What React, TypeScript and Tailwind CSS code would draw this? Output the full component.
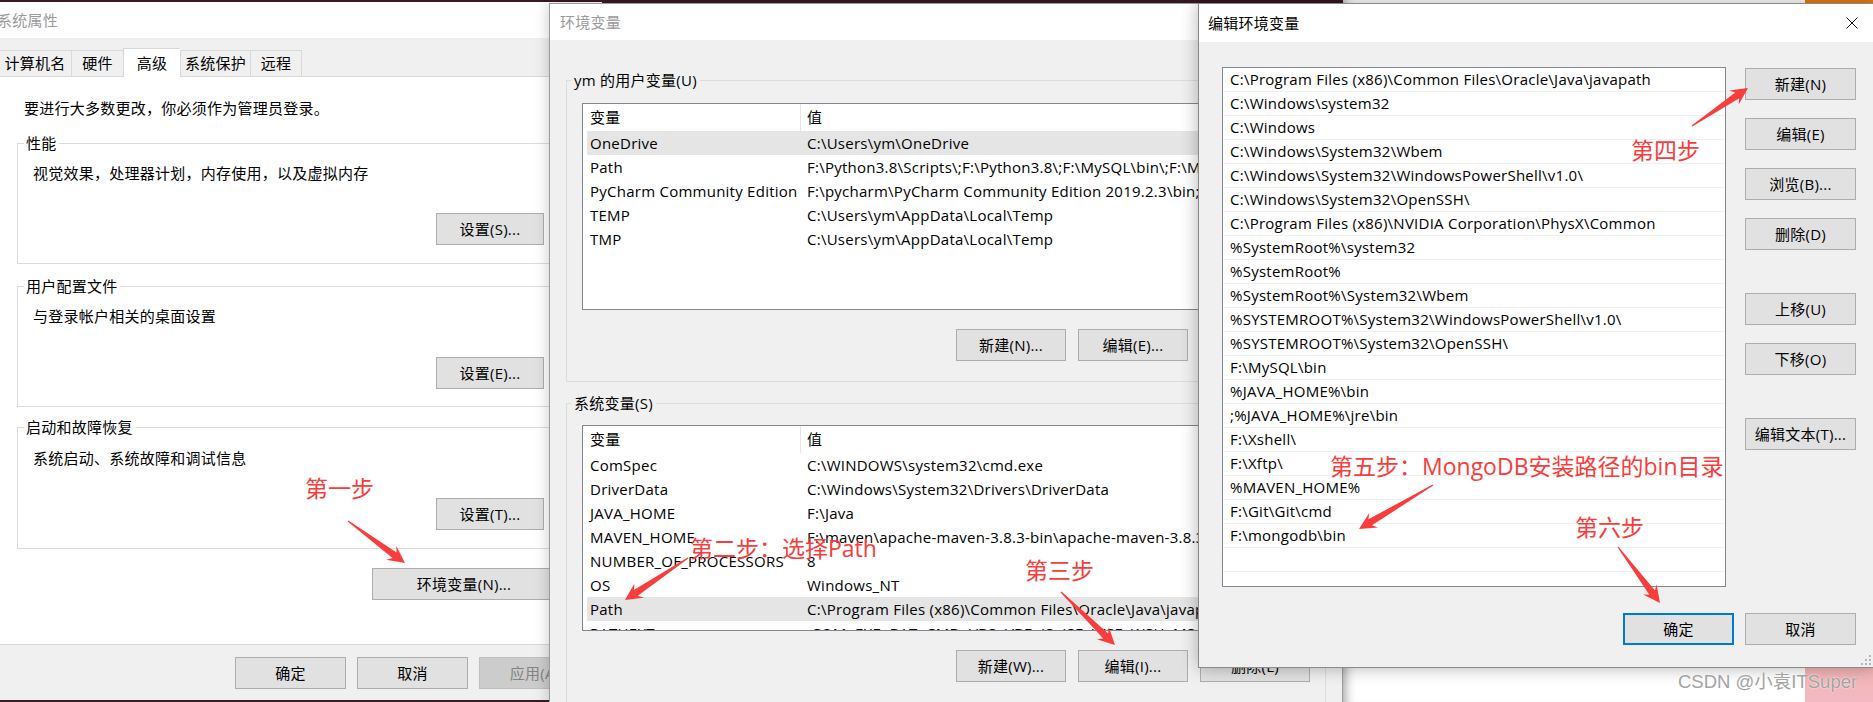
import React from "react";

const RED = "#f93c3c";

const userVars = [
  ["OneDrive", "C:\\Users\\ym\\OneDrive"],
  ["Path", "F:\\Python3.8\\Scripts\\;F:\\Python3.8\\;F:\\MySQL\\bin\\;F:\\MongoDB\\bin;C:\\Users\\ym\\AppData"],
  ["PyCharm Community Edition", "F:\\pycharm\\PyCharm Community Edition 2019.2.3\\bin;"],
  ["TEMP", "C:\\Users\\ym\\AppData\\Local\\Temp"],
  ["TMP", "C:\\Users\\ym\\AppData\\Local\\Temp"],
];

const sysVars = [
  ["ComSpec", "C:\\WINDOWS\\system32\\cmd.exe"],
  ["DriverData", "C:\\Windows\\System32\\Drivers\\DriverData"],
  ["JAVA_HOME", "F:\\Java"],
  ["MAVEN_HOME", "F:\\maven\\apache-maven-3.8.3-bin\\apache-maven-3.8.3"],
  ["NUMBER_OF_PROCESSORS", "8"],
  ["OS", "Windows_NT"],
  ["Path", "C:\\Program Files (x86)\\Common Files\\Oracle\\Java\\javapath;C:\\Windows"],
  ["PATHEXT", ".COM;.EXE;.BAT;.CMD;.VBS;.VBE;.JS;.JSE;.WSF;.WSH;.MSC"],
];

const pathItems = [
  "C:\\Program Files (x86)\\Common Files\\Oracle\\Java\\javapath",
  "C:\\Windows\\system32",
  "C:\\Windows",
  "C:\\Windows\\System32\\Wbem",
  "C:\\Windows\\System32\\WindowsPowerShell\\v1.0\\",
  "C:\\Windows\\System32\\OpenSSH\\",
  "C:\\Program Files (x86)\\NVIDIA Corporation\\PhysX\\Common",
  "%SystemRoot%\\system32",
  "%SystemRoot%",
  "%SystemRoot%\\System32\\Wbem",
  "%SYSTEMROOT%\\System32\\WindowsPowerShell\\v1.0\\",
  "%SYSTEMROOT%\\System32\\OpenSSH\\",
  "F:\\MySQL\\bin",
  "%JAVA_HOME%\\bin",
  ";%JAVA_HOME%\\jre\\bin",
  "F:\\Xshell\\",
  "F:\\Xftp\\",
  "%MAVEN_HOME%",
  "F:\\Git\\Git\\cmd",
  "F:\\mongodb\\bin",
  "",
  "",
];

function Btn({ children, className = "" }: { children: React.ReactNode; className?: string }) {
  return (
    <div
      className={`h-[32px] shrink-0 border border-[#adadad] bg-[#e1e1e1] flex items-center justify-center whitespace-nowrap ${className}`}
    >
      {children}
    </div>
  );
}

function VarTable({ rows, selected, height }: { rows: string[][]; selected: string; height: string }) {
  return (
    <div className={`${height} border border-[#828790] bg-white overflow-hidden`}>
      <div className="h-[27px] flex items-center">
        <div className="w-[218px] h-full pl-[7px] flex items-center border-r border-[#e5e5e5]">变量</div>
        <div className="pl-[6px]">值</div>
      </div>
      <div className="px-[4px]">
        {rows.map(([k, v]) => (
          <div
            key={k}
            className={`h-[24px] flex items-center whitespace-nowrap ${k === selected ? "bg-[#e5e5e5]" : ""}`}
          >
            <div className="w-[213px] shrink-0 pl-[3px] overflow-hidden">{k}</div>
            <div className="pl-[7px]">{v}</div>
          </div>
        ))}
      </div>
    </div>
  );
}

function Arrow({ x1, y1, x2, y2 }: { x1: number; y1: number; x2: number; y2: number }) {
  const dx = x2 - x1;
  const dy = y2 - y1;
  const L = Math.hypot(dx, dy);
  const ux = dx / L;
  const uy = dy / L;
  const nx = -uy;
  const ny = ux;
  const pt = (u: number, v: number) => `${x1 + ux * u + nx * v},${y1 + uy * u + ny * v}`;
  const pts = [
    pt(0, 0.6),
    pt(L - 13, 3.5),
    pt(L - 17, 8.5),
    pt(L, 0),
    pt(L - 17, -8.5),
    pt(L - 13, -3.5),
    pt(0, -0.6),
  ].join(" ");
  return <polygon points={pts} fill={RED} />;
}

function Note({ text, className }: { text: string; className: string }) {
  return (
    <div className={`absolute text-[23px] leading-[30px] text-[#f93c3c] whitespace-nowrap tracking-normal ${className}`}>
      {text}
    </div>
  );
}

function SystemProps() {
  return (
    <div className="absolute left-[-8px] top-[2px] w-[610px] h-[698px] bg-[#f0f0f0] flex flex-col">
      <div className="h-[36px] shrink-0 bg-white flex items-center pl-[5px] text-[#9a9a9a]">系统属性</div>
      <div className="h-[38px] shrink-0 flex items-end pl-[6px]">
        <div className="w-[73px] h-[26px] border-t border-l border-[#d9d9d9] flex items-center justify-center">计算机名</div>
        <div className="w-[52px] h-[26px] border-t border-l border-[#d9d9d9] flex items-center justify-center">硬件</div>
        <div className="relative z-10 w-[57px] h-[29px] mb-[-1px] bg-white border-t border-l border-[#d9d9d9] flex items-start pt-[3px] justify-center">
          高级
        </div>
        <div className="w-[70px] h-[26px] border-t border-l border-[#d9d9d9] flex items-center justify-center">系统保护</div>
        <div className="w-[52px] h-[26px] border-t border-l border-r border-[#d9d9d9] flex items-center justify-center">远程</div>
      </div>
      <div className="mx-[6px] h-[569px] shrink-0 bg-white border border-[#d9d9d9] pl-[18px] pr-[40px] flex flex-col">
        <div className="mt-[21px] ml-[7px] leading-[20px]">要进行大多数更改，你必须作为管理员登录。</div>

        <fieldset className="mt-[15px] min-w-0 border border-[#dcdcdc] pl-[6px] pr-[10px] pb-[18px]">
          <legend className="px-[2px] leading-[20px]">性能</legend>
          <div className="flex flex-col">
            <div className="mt-[10px] ml-[9px] leading-[20px]">视觉效果，处理器计划，内存使用，以及虚拟内存</div>
            <Btn className="mt-[30px] self-end w-[108px]">设置(S)...</Btn>
          </div>
        </fieldset>

        <fieldset className="mt-[12px] min-w-0 border border-[#dcdcdc] pl-[6px] pr-[10px] pb-[17px]">
          <legend className="px-[2px] leading-[20px]">用户配置文件</legend>
          <div className="flex flex-col">
            <div className="mt-[10px] ml-[9px] leading-[20px]">与登录帐户相关的桌面设置</div>
            <Btn className="mt-[31px] self-end w-[108px]">设置(E)...</Btn>
          </div>
        </fieldset>

        <fieldset className="mt-[10px] min-w-0 border border-[#dcdcdc] pl-[6px] pr-[10px] pb-[18px]">
          <legend className="px-[2px] leading-[20px]">启动和故障恢复</legend>
          <div className="flex flex-col">
            <div className="mt-[11px] ml-[9px] leading-[20px]">系统启动、系统故障和调试信息</div>
            <Btn className="mt-[30px] self-end w-[108px]">设置(T)...</Btn>
          </div>
        </fieldset>

        <Btn className="mt-[19px] self-end w-[184px] mr-[-1px]">环境变量(N)...</Btn>
      </div>
      <div className="flex justify-end gap-[11px] pt-[12px] pr-[12px]">
        <Btn className="w-[111px]">确定</Btn>
        <Btn className="w-[111px]">取消</Btn>
        <div className="w-[111px] h-[32px] border border-[#bfbfbf] bg-[#cccccc] text-[#838383] flex items-center justify-center">
          应用(A)
        </div>
      </div>
    </div>
  );
}

function EnvVars() {
  return (
    <div className="absolute left-[549px] top-[3px] w-[794px] h-[720px] border border-[#9c9c9c] bg-[#f0f0f0] flex flex-col shadow-[0_0_14px_rgba(0,0,0,0.22)]">
      <div className="h-[36px] shrink-0 bg-white flex items-center pl-[10px] text-[#9a9a9a]">环境变量</div>
      <div className="px-[16px] flex flex-col">
        <fieldset className="mt-[30px] min-w-0 border border-[#dcdcdc] pl-[4px] pr-[15px] pb-[20px]">
          <legend className="px-[3px] leading-[20px]">ym 的用户变量(U)</legend>
          <div className="ml-[11px] mt-[13px]">
            <VarTable rows={userVars} selected="OneDrive" height="h-[207px]" />
            <div className="mt-[19px] flex justify-end gap-[12px]">
              <Btn className="w-[110px]">新建(N)...</Btn>
              <Btn className="w-[110px]">编辑(E)...</Btn>
              <Btn className="w-[110px]">删除(D)</Btn>
            </div>
          </div>
        </fieldset>

        <fieldset className="mt-[11px] min-w-0 border border-[#dcdcdc] pl-[4px] pr-[15px] pb-[20px]">
          <legend className="px-[3px] leading-[20px]">系统变量(S)</legend>
          <div className="ml-[11px] mt-[12px]">
            <VarTable rows={sysVars} selected="Path" height="h-[206px]" />
            <div className="mt-[19px] flex justify-end gap-[12px]">
              <Btn className="w-[110px]">新建(W)...</Btn>
              <Btn className="w-[110px]">编辑(I)...</Btn>
              <Btn className="w-[110px]">删除(L)</Btn>
            </div>
          </div>
        </fieldset>
      </div>
    </div>
  );
}

function EditEnv() {
  return (
    <div className="absolute left-[1198px] top-[3px] w-[678px] h-[665px] border border-[#8a8a8a] bg-[#f0f0f0] flex flex-col shadow-[0_0_16px_rgba(0,0,0,0.3)]">
      <div className="h-[38px] shrink-0 bg-white flex items-center justify-between">
        <span className="pl-[9px]">编辑环境变量</span>
        <div className="w-[46px] h-full flex items-center justify-center">
          <svg width="12" height="12" viewBox="0 0 12 12">
            <path d="M0.5 0.5 L11.5 11.5 M11.5 0.5 L0.5 11.5" stroke="#111" strokeWidth="1" />
          </svg>
        </div>
      </div>
      <div className="flex pl-[23px] pt-[25px]">
        <div className="w-[504px] h-[520px] shrink-0 border border-[#828790] bg-white overflow-hidden">
          {pathItems.map((p, i) => (
            <div key={i} className="h-[24px] border-b border-[#f0f0f0] pl-[7px] flex items-center whitespace-nowrap">
              {p}
            </div>
          ))}
        </div>
        <div className="ml-[19px] mt-[1px] w-[111px] flex flex-col gap-[18px]">
          <Btn className="w-[111px]">新建(N)</Btn>
          <Btn className="w-[111px]">编辑(E)</Btn>
          <Btn className="w-[111px]">浏览(B)...</Btn>
          <Btn className="w-[111px]">删除(D)</Btn>
          <Btn className="w-[111px] mt-[25px]">上移(U)</Btn>
          <Btn className="w-[111px]">下移(O)</Btn>
          <Btn className="w-[111px] mt-[25px]">编辑文本(T)...</Btn>
        </div>
      </div>
      <div className="mt-[26px] flex justify-end gap-[11px] pr-[19px]">
        <div className="w-[111px] h-[32px] border-2 border-[#0078d7] bg-[#e1e1e1] flex items-center justify-center">确定</div>
        <Btn className="w-[111px]">取消</Btn>
      </div>
      <div className="mt-[10px] flex justify-end pr-[3px]">
        <svg width="11" height="11" viewBox="0 0 11 11">
          <rect x="8" y="0" width="2" height="2" fill="#b4b4b4" />
          <rect x="4" y="4" width="2" height="2" fill="#b4b4b4" />
          <rect x="8" y="4" width="2" height="2" fill="#b4b4b4" />
          <rect x="0" y="8" width="2" height="2" fill="#b4b4b4" />
          <rect x="4" y="8" width="2" height="2" fill="#b4b4b4" />
          <rect x="8" y="8" width="2" height="2" fill="#b4b4b4" />
        </svg>
      </div>
    </div>
  );
}

export default function App() {
  return (
    <div className="relative w-[1873px] h-[702px] overflow-hidden bg-[#3a1a22] text-black text-[15px] tracking-[0.25px] font-['Open_Sans','Noto_Sans_CJK_SC',sans-serif]">
      <div className="absolute left-[1343px] top-0 w-[462px] h-[702px] bg-white shadow-[inset_10px_0_10px_-8px_rgba(0,0,0,0.25)]" />
      <div className="absolute left-[1805px] top-0 w-[68px] h-[702px] bg-linear-to-b from-[#e97c0c] via-[#f0901e] to-[#f3b9c2]" />

      <SystemProps />
      <EnvVars />
      <EditEnv />

      <svg className="absolute inset-0 pointer-events-none" width="1873" height="702">
        <Arrow x1={348} y1={521} x2={405} y2={563} />
        <Arrow x1={688} y1={558} x2={625} y2={600} />
        <Arrow x1={1061} y1={592} x2={1115} y2={645} />
        <Arrow x1={1692} y1={126} x2={1748} y2={88} />
        <Arrow x1={1433} y1={485} x2={1359} y2={529} />
        <Arrow x1={1618} y1={547} x2={1660} y2={603} />
      </svg>

      <Note text="第一步" className="left-[305px] top-[473px]" />
      <Note text="第二步：选择Path" className="left-[690px] top-[533px]" />
      <Note text="第三步" className="left-[1025px] top-[555px]" />
      <Note text="第四步" className="left-[1631px] top-[135px]" />
      <Note text="第五步：MongoDB安装路径的bin目录" className="left-[1330px] top-[451px]" />
      <Note text="第六步" className="left-[1575px] top-[512px]" />

      <div className="absolute left-[1678px] top-[669px] text-[18.5px] leading-[26px] tracking-normal text-[#a3a3a3] font-['Liberation_Sans','Noto_Sans_CJK_SC',sans-serif] [text-shadow:0_0_2px_#fff]">
        CSDN @小袁ITSuper
      </div>
    </div>
  );
}
